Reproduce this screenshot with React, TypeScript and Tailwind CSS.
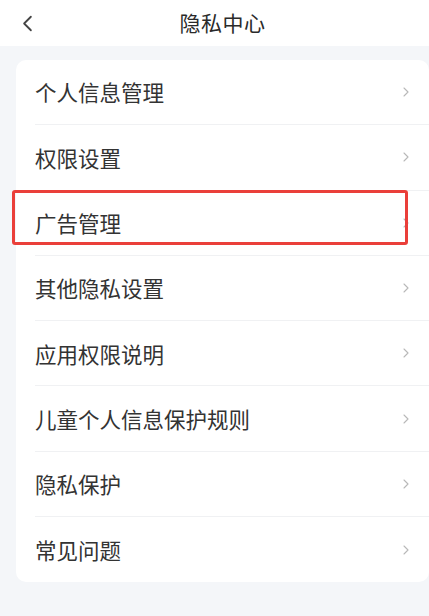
import { ChevronLeft, ChevronRight } from "lucide-react";

const items = [
  "个人信息管理",
  "权限设置",
  "广告管理",
  "其他隐私设置",
  "应用权限说明",
  "儿童个人信息保护规则",
  "隐私保护",
  "常见问题",
];

export default function App() {
  return (
    <div
      className="relative w-[429px] h-[616px] overflow-hidden bg-[#f4f6f9]"
      style={{ fontFamily: '"Noto Sans CJK SC", "Noto Sans", sans-serif' }}
    >
      {/* Header */}
      <div className="relative h-[46px] bg-white flex items-center justify-center">
        <ChevronLeft className="absolute left-[14px] top-[10px] text-[#444]" size={27} strokeWidth={1.6} />
        <span className="ml-[16px] text-[21px] font-normal text-[#2a2a2a] tracking-[0.5px]">隐私中心</span>
      </div>

      {/* List card */}
      <div className="ml-4 mt-[14px] w-[413px] bg-white rounded-[10px]">
        {items.map((label, i) => (
          <div key={label} className="pl-[19px]">
            <div
              className={`h-[65.3px] flex items-center justify-between pr-[15px] ${
                i < items.length - 1 ? "border-b border-[#f0f1f3]" : ""
              }`}
            >
              <span className="text-[21.5px] text-[#333] leading-none">{label}</span>
              <ChevronRight className="text-[#b8b8b8]" size={16} strokeWidth={1.6} />
            </div>
          </div>
        ))}
      </div>

      {/* Highlight box */}
      <div className="absolute left-[12px] top-[190px] w-[396px] h-[55px] border-[3px] border-[#ea3f3a] rounded-[3px]" />
    </div>
  );
}
